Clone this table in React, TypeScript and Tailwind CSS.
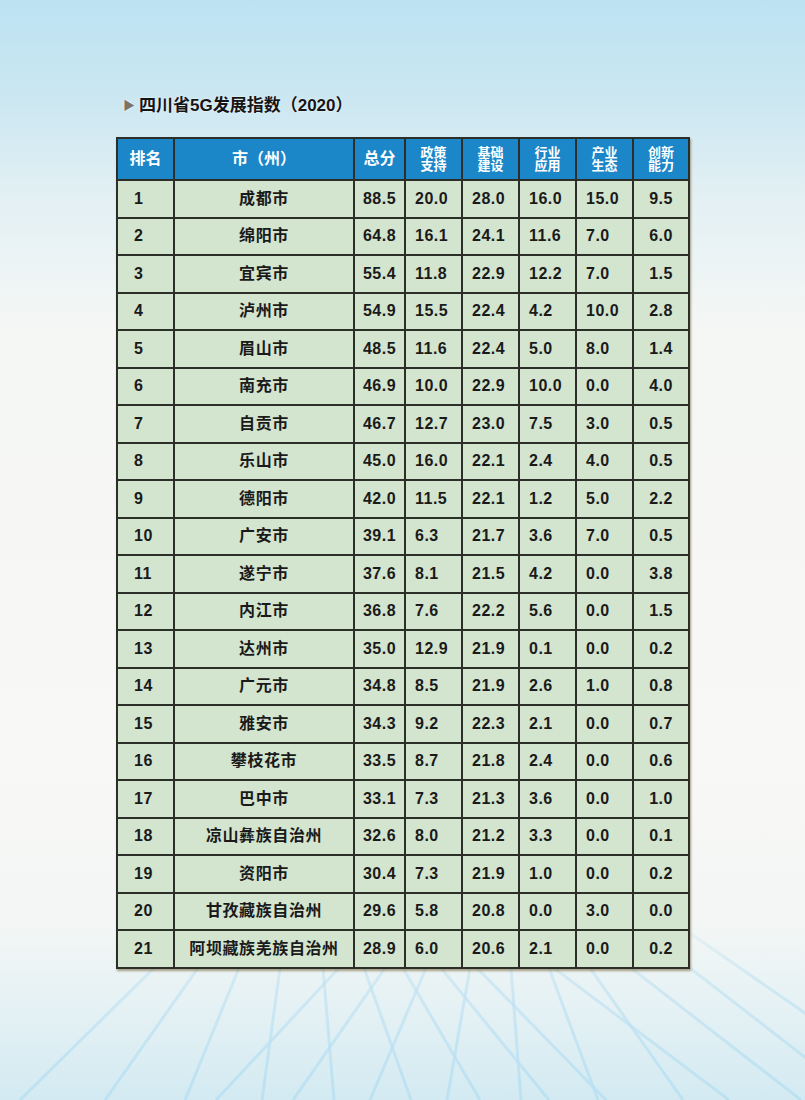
import React from "react";

type Row = [string, string, string, string, string, string, string, string];

const rows: Row[] = [
  ["1", "成都市", "88.5", "20.0", "28.0", "16.0", "15.0", "9.5"],
  ["2", "绵阳市", "64.8", "16.1", "24.1", "11.6", "7.0", "6.0"],
  ["3", "宜宾市", "55.4", "11.8", "22.9", "12.2", "7.0", "1.5"],
  ["4", "泸州市", "54.9", "15.5", "22.4", "4.2", "10.0", "2.8"],
  ["5", "眉山市", "48.5", "11.6", "22.4", "5.0", "8.0", "1.4"],
  ["6", "南充市", "46.9", "10.0", "22.9", "10.0", "0.0", "4.0"],
  ["7", "自贡市", "46.7", "12.7", "23.0", "7.5", "3.0", "0.5"],
  ["8", "乐山市", "45.0", "16.0", "22.1", "2.4", "4.0", "0.5"],
  ["9", "德阳市", "42.0", "11.5", "22.1", "1.2", "5.0", "2.2"],
  ["10", "广安市", "39.1", "6.3", "21.7", "3.6", "7.0", "0.5"],
  ["11", "遂宁市", "37.6", "8.1", "21.5", "4.2", "0.0", "3.8"],
  ["12", "内江市", "36.8", "7.6", "22.2", "5.6", "0.0", "1.5"],
  ["13", "达州市", "35.0", "12.9", "21.9", "0.1", "0.0", "0.2"],
  ["14", "广元市", "34.8", "8.5", "21.9", "2.6", "1.0", "0.8"],
  ["15", "雅安市", "34.3", "9.2", "22.3", "2.1", "0.0", "0.7"],
  ["16", "攀枝花市", "33.5", "8.7", "21.8", "2.4", "0.0", "0.6"],
  ["17", "巴中市", "33.1", "7.3", "21.3", "3.6", "0.0", "1.0"],
  ["18", "凉山彝族自治州", "32.6", "8.0", "21.2", "3.3", "0.0", "0.1"],
  ["19", "资阳市", "30.4", "7.3", "21.9", "1.0", "0.0", "0.2"],
  ["20", "甘孜藏族自治州", "29.6", "5.8", "20.8", "0.0", "3.0", "0.0"],
  ["21", "阿坝藏族羌族自治州", "28.9", "6.0", "20.6", "2.1", "0.0", "0.2"],
];

// bottom x at y=1100, x where the line crosses y=968
const beams: [number, number][] = [
  [20, 154], [105, 198], [185, 239], [262, 280], [216, 339], [293, 385],
  [334, 323], [370, 426], [411, 364], [447, 470], [480, 403], [521, 511],
  [549, 441], [598, 549], [606, 477], [683, 590], [729, 554], [801, 631],
  [860, 690], [930, 740],
];

function Beams() {
  return (
    <svg className="absolute inset-0 h-full w-full" viewBox="0 0 805 1100" preserveAspectRatio="none">
      <defs>
        <linearGradient id="fade" gradientUnits="userSpaceOnUse" x1="0" y1="900" x2="0" y2="1100">
          <stop offset="0" stopColor="#bfe2f2" stopOpacity="0" />
          <stop offset="0.4" stopColor="#bfe2f2" stopOpacity="0.6" />
          <stop offset="1" stopColor="#b9e0f1" stopOpacity="0.9" />
        </linearGradient>
      </defs>
      {beams.map(([b, t], i) => {
        const k = (t - b) / 132;
        const topY = 900;
        return (
          <line
            key={i}
            x1={b}
            y1={1100}
            x2={b + k * (1100 - topY)}
            y2={topY}
            stroke="url(#fade)"
            strokeWidth={3}
          />
        );
      })}
    </svg>
  );
}

const head = "flex items-center justify-center bg-[#1b86c8] text-white";
const cell = "flex items-center bg-[#d3e4cf] text-[16px] text-[#1a1a1a]";

export default function App() {
  return (
    <div className="relative h-[1100px] w-[805px] overflow-hidden bg-[linear-gradient(180deg,#bde3f3_0%,#c9e6f1_8%,#e3f0f4_18%,#f5f7f5_30%,#f8f8f6_70%,#f3f6f5_84%,#e4f1f4_92%,#d3eaf2_100%)] font-['Liberation_Sans','Noto_Sans_CJK_SC',sans-serif] font-bold">
      <Beams />
      <div className="relative pl-[123px] pt-[96px]">
        <div className="flex items-center gap-[4px] text-[17px] leading-[20px] text-[#151515] [text-shadow:0_0_2px_#fff]">
          <span className="text-[12px] text-[#7d7466]">▶</span>
          <span>四川省5G发展指数（2020）</span>
        </div>
      </div>

      <div className="relative ml-[116px] mt-[21px] w-[574px] border-2 border-[#2b2f28] bg-[#2b2f28] shadow-[1px_2px_2px_rgba(120,100,60,0.6)]">
        <div className="grid grid-cols-[55px_178px_49px_55px_55px_55px_55px_54px] grid-rows-[40px] auto-rows-[35.5px] gap-[2px]">
          <div className={`${head} text-[16px]`}>排名</div>
          <div className={`${head} text-[16px]`}>市（州）</div>
          <div className={`${head} text-[16px]`}>总分</div>
          {[
            ["政策", "支持"],
            ["基础", "建设"],
            ["行业", "应用"],
            ["产业", "生态"],
            ["创新", "能力"],
          ].map(([a, b]) => (
            <div key={a} className={`${head} flex-col text-[13px] leading-[13px]`}>
              <span>{a}</span>
              <span>{b}</span>
            </div>
          ))}
          {rows.map((r) => (
            <React.Fragment key={r[0]}>
              <div className={`${cell} pl-[16px] tracking-[0.5px]`}>{r[0]}</div>
              <div className={`${cell} justify-center tracking-[0.6px]`}>{r[1]}</div>
              <div className={`${cell} justify-center tracking-[0.5px]`}>{r[2]}</div>
              <div className={`${cell} pl-[9px] tracking-[0.5px]`}>{r[3]}</div>
              <div className={`${cell} pl-[9px] tracking-[0.5px]`}>{r[4]}</div>
              <div className={`${cell} pl-[9px] tracking-[0.5px]`}>{r[5]}</div>
              <div className={`${cell} pl-[9px] tracking-[0.5px]`}>{r[6]}</div>
              <div className={`${cell} justify-center tracking-[0.5px]`}>{r[7]}</div>
            </React.Fragment>
          ))}
        </div>
      </div>
    </div>
  );
}
